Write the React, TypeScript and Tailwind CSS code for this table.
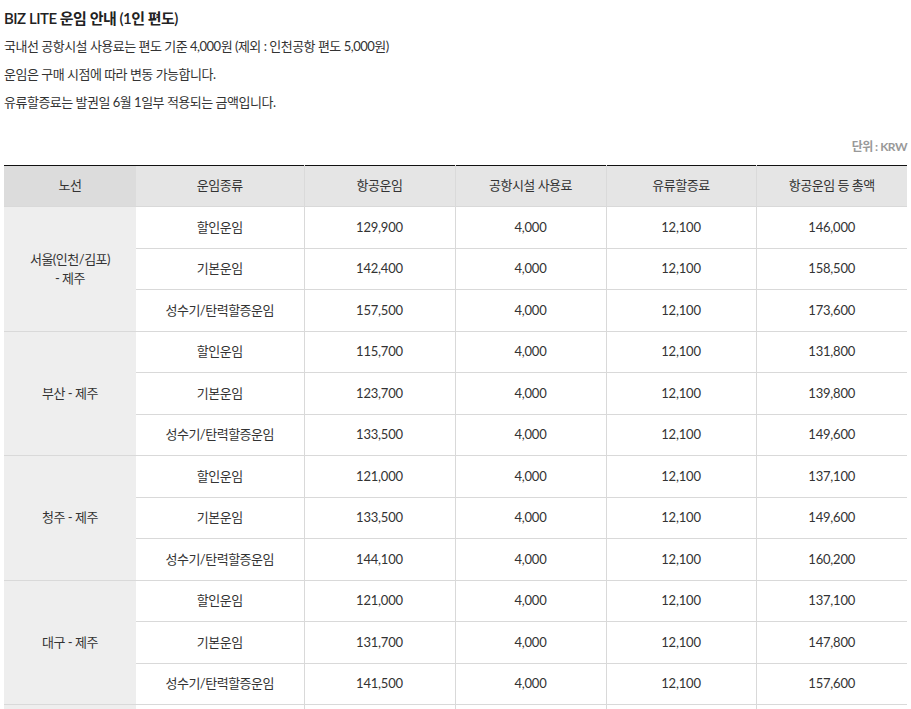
const groups = [
  {
    route: ['서울(인천/김포)', '- 제주'],
    rows: [
      ['할인운임', '129,900', '4,000', '12,100', '146,000'],
      ['기본운임', '142,400', '4,000', '12,100', '158,500'],
      ['성수기/탄력할증운임', '157,500', '4,000', '12,100', '173,600'],
    ],
  },
  {
    route: ['부산 - 제주'],
    rows: [
      ['할인운임', '115,700', '4,000', '12,100', '131,800'],
      ['기본운임', '123,700', '4,000', '12,100', '139,800'],
      ['성수기/탄력할증운임', '133,500', '4,000', '12,100', '149,600'],
    ],
  },
  {
    route: ['청주 - 제주'],
    rows: [
      ['할인운임', '121,000', '4,000', '12,100', '137,100'],
      ['기본운임', '133,500', '4,000', '12,100', '149,600'],
      ['성수기/탄력할증운임', '144,100', '4,000', '12,100', '160,200'],
    ],
  },
  {
    route: ['대구 - 제주'],
    rows: [
      ['할인운임', '121,000', '4,000', '12,100', '137,100'],
      ['기본운임', '131,700', '4,000', '12,100', '147,800'],
      ['성수기/탄력할증운임', '141,500', '4,000', '12,100', '157,600'],
    ],
  },
];

const headers = ['운임종류', '항공운임', '공항시설 사용료', '유류할증료', '항공운임 등 총액'];

export default function App() {
  return (
    <div
      className="w-[911px] h-[709px] overflow-hidden bg-white px-[4px] pt-[7px] text-[#333] tracking-[-0.5px]"
      style={{ fontFamily: 'Lato, "Noto Sans CJK KR", sans-serif' }}
    >
      <h1 className="text-[15px] leading-[22px] font-semibold text-[#222]">BIZ LITE 운임 안내 (1인 편도)</h1>
      <div className="mt-[3px] text-[13px] leading-[28px]">
        <p>국내선 공항시설 사용료는 편도 기준 4,000원 (제외 : 인천공항 편도 5,000원)</p>
        <p>운임은 구매 시점에 따라 변동 가능합니다.</p>
        <p>유류할증료는 발권일 6월 1일부 적용되는 금액입니다.</p>
      </div>
      <p className="mt-[23px] text-right text-[12px] leading-[16px] font-bold text-[#999]">단위 : KRW</p>
      <table className="mt-[10px] w-[903px] table-fixed border-collapse border-t border-[#111] text-[13px] text-center">
        <colgroup>
          <col className="w-[132px]" />
          <col className="w-[168px]" />
          <col className="w-[151px]" />
          <col className="w-[151px]" />
          <col className="w-[150px]" />
          <col className="w-[151px]" />
        </colgroup>
        <thead>
          <tr className="h-[41px] border-b border-[#d9d9d9]">
            <th className="bg-[#dcdcdc] font-normal">노선</th>
            {headers.map((h, i) => (
              <th
                key={h}
                className={`bg-[#e5e5e5] font-normal ${i > 0 ? 'border-l border-[#dadada]' : ''}`}
              >
                {h}
              </th>
            ))}
          </tr>
        </thead>
        <tbody>
          {groups.map((g) =>
            g.rows.map((r, ri) => (
              <tr key={g.route[0] + ri} className="h-[41.5px] border-b border-[#d9d9d9]">
                {ri === 0 && (
                  <td rowSpan={3} className="bg-[#eeeeee] leading-[19px]">
                    {g.route.map((line) => (
                      <div key={line}>{line}</div>
                    ))}
                  </td>
                )}
                {r.map((c, ci) => (
                  <td
                    key={ci}
                    className={ci > 0 ? 'border-l border-[#d9d9d9] tracking-[-0.2px]' : ''}
                  >
                    {c}
                  </td>
                ))}
              </tr>
            ))
          )}
          <tr className="h-[41.5px]">
            <td className="bg-[#eeeeee]"></td>
            <td></td>
            <td className="border-l border-[#d9d9d9]"></td>
            <td className="border-l border-[#d9d9d9]"></td>
            <td className="border-l border-[#d9d9d9]"></td>
            <td className="border-l border-[#d9d9d9]"></td>
          </tr>
        </tbody>
      </table>
    </div>
  );
}
